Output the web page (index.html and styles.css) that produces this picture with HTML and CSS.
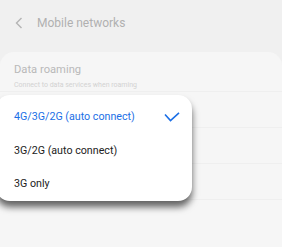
FILE: index.html
```html
<!DOCTYPE html>
<html lang="en">
<head>
    <meta charset="UTF-8">
    <meta name="viewport" content="width=device-width, initial-scale=1.0">
    <title>Mobile networks</title>
    <link rel="stylesheet" href="styles.css">
</head>
<body>
    <div class="header">
        <svg class="back" width="8" height="12" viewBox="0 0 8 12">
            <path d="M6.5 1 L1.5 6 L6.5 11" fill="none" stroke="#b4b4b4" stroke-width="1.4"/>
        </svg>
        <span class="title">Mobile networks</span>
    </div>

    <div class="card">
        <div class="row">
            <div class="row-title">Data roaming</div>
            <div class="row-sub">Connect to data services when roaming</div>
        </div>
        <div class="row"></div>
        <div class="row"></div>
        <div class="row"></div>
    </div>

    <div class="popup">
        <div class="option selected">
            <span>4G/3G/2G (auto connect)</span>
            <svg class="check" width="16" height="10" viewBox="0 0 16 10">
                <path d="M1 2.5 L6.5 8.5 L15 0.8" fill="none" stroke="#1b6fe6" stroke-width="1.6"/>
            </svg>
        </div>
        <div class="option"><span>3G/2G (auto connect)</span></div>
        <div class="option"><span>3G only</span></div>
    </div>
</body>
</html>
```

FILE: styles.css
```css
body {
    margin: 0;
    width: 282px;
    height: 247px;
    overflow: hidden;
    background: #f0f0f0;
    font-family: Roboto, "Noto Sans", sans-serif;
    position: relative;
}
.header {
    display: flex;
    align-items: center;
    height: 44px;
    padding: 1px 0 0 15px;
    box-sizing: border-box;
}
.back {
    margin-right: 14px;
}
.title {
    font-size: 12px;
    color: #b0b0b0;
}
.card {
    margin-top: 8px;
    background: #f6f6f6;
    border-radius: 14px 14px 0 0;
    height: 200px;
}
.row {
    height: 36px;
    padding: 11px 14px 0;
    border-bottom: 1px solid #efefef;
    box-sizing: border-box;
}
.row:first-child {
    height: 40px;
}
.row-title {
    font-size: 11.2px;
    color: #b9b9b9;
}
.row-sub {
    font-size: 7px;
    color: #d2d2d2;
    margin-top: 5px;
}
.popup {
    position: absolute;
    left: -4px;
    top: 95px;
    width: 196px;
    height: 106px;
    background: #ffffff;
    border-radius: 14px;
    box-shadow: 0 6px 7px rgba(0, 0, 0, 0.6);
    padding: 5px 0;
    box-sizing: border-box;
}
.option {
    display: flex;
    align-items: center;
    justify-content: space-between;
    height: 33.5px;
    padding: 0 12px 0 18px;
    font-size: 10.7px;
    color: #222222;
}
.option.selected {
    color: #1b6fe6;
}
```
